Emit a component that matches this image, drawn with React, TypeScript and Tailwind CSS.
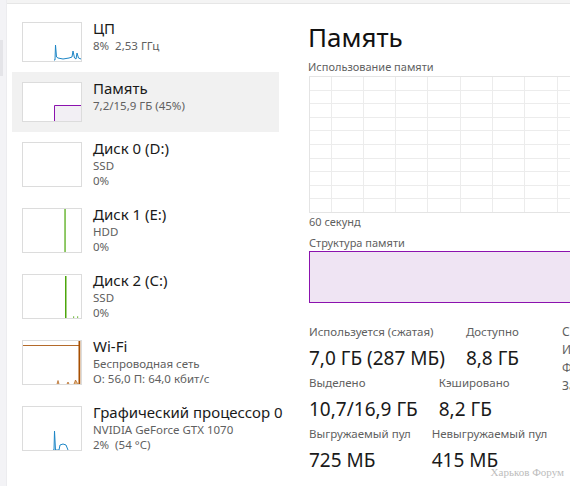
import React from 'react';

type Item = {
  title: string;
  lines: string[];
  chart: React.ReactNode;
  selected?: boolean;
};

const Thumb: React.FC<{ tall?: boolean; children: React.ReactNode }> = ({ tall, children }) => (
  <div
    className={`mt-[3px] w-[60px] shrink-0 border border-[#dcdcdc] bg-white ${tall ? 'h-[45px]' : 'h-[40px]'}`}
  >
    <svg width="58" height={tall ? 43 : 38} viewBox={`0 0 58 ${tall ? 43 : 38}`} className="block">
      {children}
    </svg>
  </div>
);

const items: Item[] = [
  {
    title: 'ЦП',
    lines: ['8%  2,53 ГГц'],
    chart: (
      <polyline
        points="31,37 32,37 32.5,22 33.5,34 35,35 40,36 46,35 49,34 50,28 51.5,35 53,36 54,30 55.5,35 58,36"
        fill="none"
        stroke="#1d86c6"
        strokeWidth="1"
      />
    ),
  },
  {
    title: 'Память',
    lines: ['7,2/15,9 ГБ (45%)'],
    selected: true,
    chart: (
      <>
        <rect x="31.5" y="22.5" width="27" height="16" fill="#f2eff4" />
        <polyline points="31.5,38 31.5,22.5 58,22.5" fill="none" stroke="#8b12ae" strokeWidth="1" />
      </>
    ),
  },
  {
    title: 'Диск 0 (D:)',
    lines: ['SSD', '0%'],
    chart: null,
  },
  {
    title: 'Диск 1 (E:)',
    lines: ['HDD', '0%'],
    chart: (
      <>
        <rect x="41.5" y="0" width="1.5" height="43" fill="#c9e6b3" />
        <line x1="42" y1="0" x2="42" y2="43" stroke="#4da60c" strokeWidth="1" />
      </>
    ),
  },
  {
    title: 'Диск 2 (C:)',
    lines: ['SSD', '0%'],
    chart: (
      <>
        <rect x="42" y="1" width="1.5" height="42" fill="#4da60c" />
        <rect x="50" y="41.5" width="1.2" height="1.2" fill="#4da60c" />
        <rect x="54" y="41.5" width="1.2" height="1.2" fill="#4da60c" />
      </>
    ),
  },
  {
    title: 'Wi-Fi',
    lines: ['Беспроводная сеть', 'О: 56,0 П: 64,0 кбит/с'],
    chart: (
      <>
        <line x1="0" y1="4.5" x2="56" y2="4.5" stroke="#b46a2a" strokeWidth="1" />
        <rect x="55.5" y="0" width="1.8" height="43" fill="#a74f01" />
        <polyline points="34,43 35,39.5 36,43" fill="#e0b27e" stroke="#a74f01" strokeWidth="0.6" />
        <polyline points="44,43 45,41 46,43" fill="#e0b27e" stroke="#a74f01" strokeWidth="0.6" />
        <polyline points="51,43 52.5,39 54,41.5 55.5,43" fill="#e0b27e" stroke="#a74f01" strokeWidth="0.6" />
      </>
    ),
  },
  {
    title: 'Графический процессор 0',
    lines: ['NVIDIA GeForce GTX 1070', '2%  (54 °C)'],
    chart: (
      <polyline
        points="30,43 31,43 31.5,24 32.5,43 36,43 37,38 40,37 43,38 45,43"
        fill="none"
        stroke="#1d86c6"
        strokeWidth="1"
      />
    ),
  },
];

const Row: React.FC<{ item: Item }> = ({ item }) => {
  const tall = item.lines.length > 1;
  return (
    <div
      className={`flex gap-[11px] px-[10px] pt-[7px] w-[267px] ${tall ? 'h-[66px]' : 'h-[60px]'} ${
        item.selected ? 'bg-[#f1f1f1]' : ''
      }`}
    >
      <Thumb tall={tall}>{item.chart}</Thumb>
      <div className="flex flex-col whitespace-nowrap">
        <div className="text-[15px] leading-[19px] text-[#1a1a1a]">{item.title}</div>
        {item.lines.map((l) => (
          <div key={l} className="text-[11.5px] leading-[15px] text-[#606060] whitespace-pre">
            {l}
          </div>
        ))}
      </div>
    </div>
  );
};

const Stat: React.FC<{ label: string; value: string }> = ({ label, value }) => (
  <div className="flex flex-col whitespace-nowrap">
    <div className="text-[11.5px] leading-[16px] text-[#5f5f5f]">{label}</div>
    <div className="text-[19px] leading-[28px] text-[#1a1a1a] mt-[4px]">{value}</div>
  </div>
);

const UsageGraph: React.FC = () => {
  const w = 300;
  const h = 136;
  const vLines = [22, 54, 86, 118, 151, 183, 215, 248, 280];
  const hLines = Array.from({ length: 9 }, (_, i) => ((i + 1) * h) / 10);
  return (
    <svg width={w} height={h + 1} className="block">
      {vLines.map((x) => (
        <line key={x} x1={x + 0.5} y1="0" x2={x + 0.5} y2={h} stroke="#ececec" strokeWidth="1" />
      ))}
      {hLines.map((y) => (
        <line key={y} x1="0" y1={Math.round(y) + 0.5} x2={w} y2={Math.round(y) + 0.5} stroke="#ececec" strokeWidth="1" />
      ))}
      <rect x="0.5" y="0.5" width={w} height={h} fill="none" stroke="#e4e4e4" strokeWidth="1" />
    </svg>
  );
};

export default function App() {
  return (
    <div
      className="relative flex w-[570px] h-[486px] overflow-hidden bg-white"
      style={{ fontFamily: '"Noto Sans", "Open Sans", sans-serif' }}
    >
      {/* left edge strip */}
      <div className="relative w-[7px] shrink-0 bg-[#f3f3f6] border-r border-[#ececef]">
        <div className="absolute left-0 top-[40px] w-[3px] h-[36px] bg-[#e4e4e8]" />
      </div>

      <div className="flex flex-col flex-1 min-w-0">
        <div className="h-[4px] shrink-0 bg-[#f4f4f4] border-b border-[#e6e6e6]" />

        <div className="flex flex-1 min-h-0">
          {/* sidebar */}
          <div className="w-[283px] shrink-0 pl-[5px] pt-[8px]">
            {items.map((it) => (
              <Row key={it.title} item={it} />
            ))}
          </div>

          {/* details */}
          <div className="flex-1 min-w-0 pl-[18px] pt-[15px]">
            <div className="text-[26px] leading-[36px] text-[#111]">Память</div>
            <div className="text-[11px] leading-[15px] text-[#5f5f5f] mt-[4px]">Использование памяти</div>
            <div className="ml-[1px] mt-[2px]">
              <UsageGraph />
            </div>
            <div className="text-[11px] leading-[15px] text-[#5f5f5f] ml-[1px] mt-[1px]">60 секунд</div>
            <div className="text-[11px] leading-[15px] text-[#5f5f5f] ml-[1px] mt-[6px]">Структура памяти</div>
            <div className="ml-[1px] mt-[1px] w-[300px] h-[52px] border-[1.5px] border-[#8b12ae] bg-[#efe4f3]" />

            <div className="flex ml-[1px] mt-[21px]">
              <div className="w-[253px] shrink-0 flex flex-col gap-[3px]">
                <div className="flex gap-[21px]">
                  <Stat label="Используется (сжатая)" value="7,0 ГБ (287 МБ)" />
                  <Stat label="Доступно" value="8,8 ГБ" />
                </div>
                <div className="flex gap-[21px]">
                  <Stat label="Выделено" value="10,7/16,9 ГБ" />
                  <Stat label="Кэшировано" value="8,2 ГБ" />
                </div>
                <div className="flex gap-[21px]">
                  <Stat label="Выгружаемый пул" value="725 МБ" />
                  <Stat label="Невыгружаемый пул" value="415 МБ" />
                </div>
              </div>
              <div className="flex flex-col text-[12px] leading-[18px] text-[#5f5f5f] whitespace-nowrap -mt-[1px]">
                <div>Скорость:</div>
                <div>Использовано гнезд:</div>
                <div>Форм-фактор:</div>
                <div>Зарезервировано аппаратно:</div>
              </div>
            </div>
          </div>
        </div>
      </div>

      <div
        className="absolute right-[6px] bottom-[6px] text-[11px] text-[#bdbdbd]"
        style={{ fontFamily: '"Liberation Serif", serif' }}
      >
        Харьков Форум
      </div>
    </div>
  );
}
